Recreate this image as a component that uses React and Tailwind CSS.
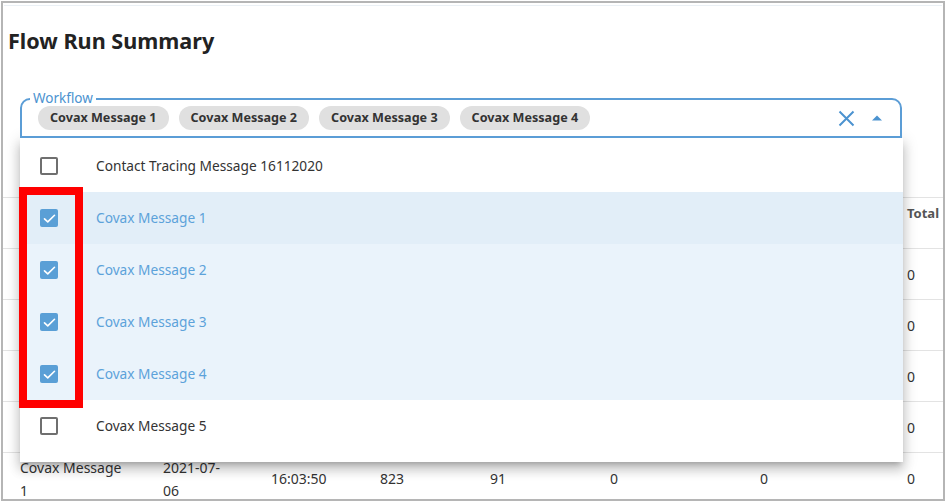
import React from "react";

const options = [
  { label: "Contact Tracing Message 16112020", checked: false },
  { label: "Covax Message 1", checked: true, hover: true },
  { label: "Covax Message 2", checked: true },
  { label: "Covax Message 3", checked: true },
  { label: "Covax Message 4", checked: true },
  { label: "Covax Message 5", checked: false },
];

const chips = ["Covax Message 1", "Covax Message 2", "Covax Message 3", "Covax Message 4"];

function Checkbox({ checked }) {
  if (checked) {
    return (
      <div className="w-[18px] h-[18px] rounded-[2px] bg-[#5a9fd6] flex items-center justify-center shrink-0">
        <svg width="15" height="15" viewBox="0 0 24 24" fill="none">
          <path d="M4 12.5l5.2 5L20 6.8" stroke="white" strokeWidth="2.6" strokeLinecap="round" strokeLinejoin="round" />
        </svg>
      </div>
    );
  }
  return <div className="w-[18px] h-[18px] rounded-[2px] border-2 border-[#6f6f6f] shrink-0" />;
}

const cols = [
  "w-[160px] pl-[17px]",
  "w-[108px]",
  "w-[109px]",
  "w-[110px]",
  "w-[120px]",
  "w-[150px]",
  "w-[147px]",
  "flex-1",
];

function Row({ cells, last }) {
  return (
    <div className={"flex h-[51px] items-center border-b border-[#e3e3e3] text-[14px] leading-[23px] text-[#333]" + (last ? " border-b-0" : "")}>
      {cells.map((c, i) => (
        <div key={i} className={cols[i]}>
          {c}
        </div>
      ))}
    </div>
  );
}

export default function App() {
  const headers = ["", "", "", "", "", "", "", "Total"];
  return (
    <div className="w-[946px] h-[502px] bg-white p-px font-['Noto_Sans',sans-serif]">
      <div className="relative h-full border-2 border-[#b5b5b5] overflow-hidden bg-white">
        <div className="h-px bg-[#eaf0f5] mt-[2px] mx-px" />
        <h1 className="pl-[5px] pt-[21px] text-[21.6px] font-bold leading-[28px] text-[#222]">Flow Run Summary</h1>

        {/* Autocomplete input */}
        <div className="relative z-20 ml-[17px] mt-[43px] w-[882px] h-[40px] bg-white">
          <div className="absolute inset-0 border-2 border-[#5b9dd6] rounded-t-[10px]" />
          <div className="absolute left-[10px] top-[-9px] bg-white px-[3px] text-[13.5px] leading-[18px] text-[#4c93d0]">
            Workflow
          </div>
          <div className="relative flex items-center h-full pl-[18px] pr-[20px]">
            <div className="flex items-center gap-[10px]">
              {chips.map((c) => (
                <div key={c} className="h-[24px] px-[12px] rounded-full bg-[#e0e0e0] flex items-center text-[12.6px] font-bold text-[#333]">
                  {c}
                </div>
              ))}
            </div>
            <div className="ml-auto flex items-center">
              <svg width="17" height="17" viewBox="0 0 17 17" fill="none">
                <path d="M1.5 1.5L15.5 15.5M15.5 1.5L1.5 15.5" stroke="#4c93d0" strokeWidth="2" />
              </svg>
              <svg className="ml-[17px]" width="10" height="6" viewBox="0 0 10 6">
                <path d="M0 5.5L5 0.5L10 5.5Z" fill="#4c93d0" />
              </svg>
            </div>
          </div>
        </div>

        {/* Table */}
        <div className="mt-[59px] border-t border-[#e3e3e3]">
          <div className="flex h-[51px] border-b border-[#e3e3e3] text-[13px] font-bold leading-[20px] text-[#555]">
            {headers.map((h, i) => (
              <div key={i} className={cols[i] + " pt-[5px]"}>
                {h}
              </div>
            ))}
          </div>
          <Row cells={["", "", "", "", "", "", "", "0"]} />
          <Row cells={["", "", "", "", "", "", "", "0"]} />
          <Row cells={["", "", "", "", "", "", "", "0"]} />
          <Row cells={["", "", "", "", "", "", "", "0"]} />
          <Row
            last
            cells={[
              <>Covax Message<br />1</>,
              <>2021-07-<br />06</>,
              "16:03:50",
              "823",
              "91",
              "0",
              "0",
              "0",
            ]}
          />
        </div>

        {/* Dropdown listbox */}
        <div className="absolute z-10 left-[17px] top-[135px] w-[883px] bg-white pt-[2px] pb-[10px] shadow-[0_5px_5px_-3px_rgba(0,0,0,0.2),0_8px_10px_1px_rgba(0,0,0,0.14),0_3px_14px_2px_rgba(0,0,0,0.12)]">
          {options.map((o) => (
            <div
              key={o.label}
              className={
                "h-[52px] flex items-center pl-[20px] " +
                (o.hover ? "bg-[#e2eef8]" : o.checked ? "bg-[#eaf3fb]" : "bg-white")
              }
            >
              <Checkbox checked={o.checked} />
              <span className={"ml-[38px] text-[13.7px] " + (o.checked ? "text-[#5ca2da]" : "text-[#333]")}>{o.label}</span>
            </div>
          ))}
        </div>

        {/* Red highlight box */}
        <div className="absolute z-30 left-[16px] top-[184px] w-[64px] h-[221px] border-[8px] border-[#ff0000]" />
      </div>
    </div>
  );
}
